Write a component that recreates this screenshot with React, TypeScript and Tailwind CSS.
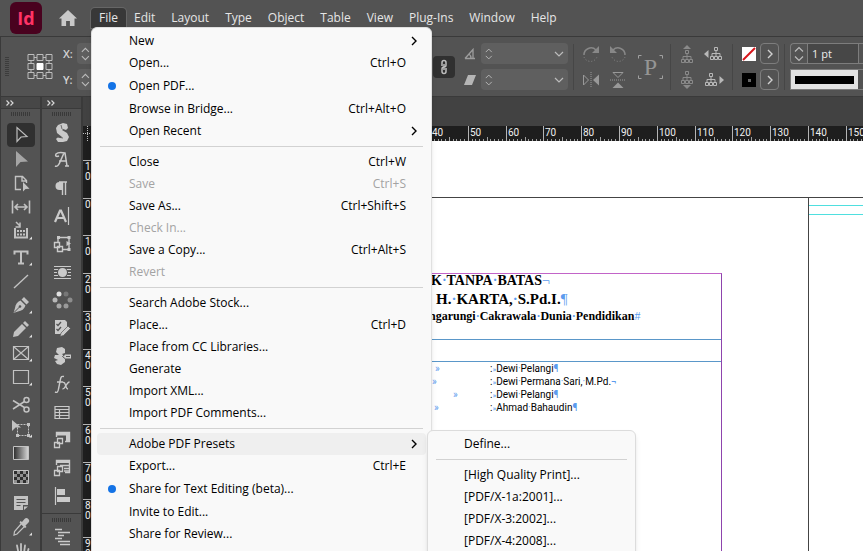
import { Fragment, type ReactNode } from 'react';

type MenuEntry = {
  label: string;
  keys?: string;
  dot?: boolean;
  sub?: boolean;
  disabled?: boolean;
  active?: boolean;
};

const menus = ['File', 'Edit', 'Layout', 'Type', 'Object', 'Table', 'View', 'Plug-Ins', 'Window', 'Help'];

const fileMenu: MenuEntry[][] = [
  [
    { label: 'New', sub: true },
    { label: 'Open...', keys: 'Ctrl+O' },
    { label: 'Open PDF...', dot: true },
    { label: 'Browse in Bridge...', keys: 'Ctrl+Alt+O' },
    { label: 'Open Recent', sub: true },
  ],
  [
    { label: 'Close', keys: 'Ctrl+W' },
    { label: 'Save', keys: 'Ctrl+S', disabled: true },
    { label: 'Save As...', keys: 'Ctrl+Shift+S' },
    { label: 'Check In...', disabled: true },
    { label: 'Save a Copy...', keys: 'Ctrl+Alt+S' },
    { label: 'Revert', disabled: true },
  ],
  [
    { label: 'Search Adobe Stock...' },
    { label: 'Place...', keys: 'Ctrl+D' },
    { label: 'Place from CC Libraries...' },
    { label: 'Generate' },
    { label: 'Import XML...' },
    { label: 'Import PDF Comments...' },
  ],
  [
    { label: 'Adobe PDF Presets', sub: true, active: true },
    { label: 'Export...', keys: 'Ctrl+E' },
    { label: 'Share for Text Editing (beta)...', dot: true },
    { label: 'Invite to Edit...' },
    { label: 'Share for Review...' },
  ],
];

const presets = ['[High Quality Print]...', '[PDF/X-1a:2001]...', '[PDF/X-3:2002]...', '[PDF/X-4:2008]...'];

function Chevron({ className = '' }: { className?: string }) {
  return (
    <svg className={className} width="6" height="10" viewBox="0 0 6 10" fill="none" stroke="currentColor" strokeWidth="1.4">
      <path d="M1 1l4 4-4 4" />
    </svg>
  );
}

function Separator() {
  return (
    <div className="flex h-[9px] items-center px-2">
      <div className="h-px w-full bg-[#d2d2d2]" />
    </div>
  );
}

function PresetMenu() {
  return (
    <div className="absolute -top-[3px] left-[330px] z-10 w-[209px] rounded-md border border-[#dcdcdc] bg-[#f9f9f9] pt-[2px] pb-8 shadow-md">
      <button className="flex h-[22px] w-full items-center pl-9">Define...</button>
      <Separator />
      {presets.map((p) => (
        <button key={p} className="flex h-[22px] w-full items-center pl-9 whitespace-nowrap">
          {p}
        </button>
      ))}
    </div>
  );
}

function FileMenu() {
  return (
    <div className="absolute top-[19px] left-0 z-20 h-[560px] w-[341px] rounded-md border border-[#e0e0e0] bg-[#f9f9f9] pt-[2px] text-black shadow-md">
      {fileMenu.map((group, i) => (
        <Fragment key={i}>
          {i > 0 && <Separator />}
          {group.map((item) => (
            <div key={item.label} className="relative mx-[5px]">
              <button
                disabled={item.disabled}
                className={`flex w-full items-center rounded ${item.dot ? 'h-6' : 'h-[22px]'} ${
                  item.active ? 'bg-[#efefef]' : ''
                } ${item.disabled ? 'text-[#a3a3a3]' : ''}`}
              >
                <span className="flex w-8 items-center pl-[11px]">
                  {item.dot && <span className="size-2 rounded-full bg-[#1473e6]" />}
                </span>
                <span className="flex-1 text-left">{item.label}</span>
                <span>{item.keys}</span>
                <span className="flex w-5 pl-[5px]">{item.sub && <Chevron />}</span>
              </button>
              {item.active && <PresetMenu />}
            </div>
          ))}
        </Fragment>
      ))}
    </div>
  );
}

function MenuBar() {
  return (
    <header className="flex h-[37px] shrink-0 border-b border-[#3a3a3a]">
      <div className="flex w-[91px] shrink-0 items-center pl-[10px]">
        <div className="flex size-8 items-center justify-center rounded-md bg-[#49021f] font-['Open_Sans',sans-serif] text-lg font-bold text-[#ff3366]">
          Id
        </div>
        <svg className="ml-4" width="20" height="18" viewBox="0 0 20 18" fill="#c9c9c9">
          <path d="M10 1L1 9.6h2.5V17h4.6v-5h3.8v5h4.6V9.6H19z" />
        </svg>
      </div>
      <nav className="flex pt-2 text-[#e6e6e6]">
        {menus.map((m) => (
          <div key={m} className="relative">
            <button
              className={`flex h-5 items-center rounded-t px-2 ${m === 'File' ? 'bg-[#383838] ring-1 ring-[#666]' : ''}`}
            >
              {m}
            </button>
            {m === 'File' && <FileMenu />}
          </div>
        ))}
      </nav>
    </header>
  );
}

function Spinner() {
  return (
    <svg width="10" height="16" viewBox="0 0 10 16" fill="none" stroke="#bcbcbc" strokeWidth="1.2">
      <path d="M1 5.5l4-4 4 4M1 10.5l4 4 4-4" />
    </svg>
  );
}

function Field({ label, drop = false }: { label: string; drop?: boolean }) {
  return (
    <div className="flex h-[21px] w-[87px] items-center rounded-sm bg-[#5f5f5f] px-[4px]">
      <Spinner />
      <input aria-label={label} className="w-full min-w-0 bg-transparent px-1 outline-none" />
      {drop && (
        <svg className="shrink-0" width="10" height="6" viewBox="0 0 10 6" fill="none" stroke="#bcbcbc" strokeWidth="1.2">
          <path d="M1 1l4 4 4-4" />
        </svg>
      )}
    </div>
  );
}

function Divider() {
  return <div className="h-[46px] w-px bg-[#464646]" />;
}

// small hierarchy glyph, shared by the container/content selectors
function Tree({ arrow, bright = false }: { arrow: 'up' | 'down' | 'left' | 'right'; bright?: boolean }) {
  const arrows = {
    up: 'M10 0l4 4H6z',
    down: 'M6 14h8l-4 4z',
    left: 'M4.500 5v8L0 9z',
    right: 'M15.500 5v8L20 9z',
  };
  const dx = arrow === 'left' ? 2 : arrow === 'right' ? -3 : 0;
  const dy = arrow === 'up' ? 3 : arrow === 'down' ? -2 : 0;
  const color = bright ? '#b8b8b8' : '#8a8a8a';
  return (
    <svg width="20" height="18" viewBox="0 0 20 18" fill="none" stroke={color}>
      <path d={arrows[arrow]} fill={color} stroke="none" />
      <g transform={`translate(${dx} ${dy})`}>
        <path d="M8.500 2.500h3v3h-3zM4.500 11.500h3v3h-3zM8.500 11.500h3v3h-3zM12.500 11.500h3v3h-3zM10 5.500v6M6 11.500v-3h8v3" />
      </g>
    </svg>
  );
}

function ControlBar() {
  return (
    <div className="flex h-[60px] shrink-0 items-center overflow-hidden border-b border-l border-[#3a3a3a]">
      <div className="flex w-[432px] shrink-0 items-center">
        <svg className="ml-1" width="4" height="20" viewBox="0 0 4 20" stroke="#3c3c3c" strokeWidth="4" strokeDasharray="1 1">
          <path d="M2 0v20" />
        </svg>
        <svg className="ml-[18px]" width="26" height="26" viewBox="0 0 26 26" fill="none" stroke="#bdbdbd">
          <path d="M1 .5h6v6H1zM10 .5h6v6h-6zM19 .5h6v6h-6zM1 9.500h6v6H1zM19 9.500h6v6h-6zM1 18.500h6v6H1zM10 18.500h6v6h-6zM19 18.500h6v6h-6zM7 3.500h3M16 3.500h3M7 21.500h3M16 21.500h3M4 6.500v3M4 15.500v3M22 6.500v3M22 15.500v3" />
          <path d="M10 9.500h6v6h-6z" fill="#fff" stroke="#fff" />
        </svg>
        <div className="ml-[10px] grid gap-[5px] text-[11px] font-semibold text-[#d2d2d2]">
          <label className="flex h-[21px] items-center">
            <span className="w-[14px]">X:</span>
            <Field label="X" />
          </label>
          <label className="flex h-[21px] items-center">
            <span className="w-[14px]">Y:</span>
            <Field label="Y" />
          </label>
        </div>
      </div>

      <button aria-label="Constrain proportions" className="flex h-[22px] w-[22px] shrink-0 items-center justify-center rounded-sm bg-[#303030]">
        <svg width="8" height="16" viewBox="0 0 8 16" fill="none" stroke="#bdbdbd" strokeWidth="1.500">
          <path d="M2 7V3.500a2 2 0 014 0V6a2 2 0 01-2 2M6 9v3.500a2 2 0 01-4 0V10a2 2 0 012-2M4 5v6" />
        </svg>
      </button>

      <div className="ml-[9px] grid shrink-0 gap-[5px]">
        <div className="flex items-center gap-[5px]">
          <svg width="12" height="12" viewBox="0 0 12 12" fill="none" stroke="#9d9d9d" strokeWidth="1.300">
            <path d="M1 10.500h10M1 10.500L9 1.500v9M5 6c1.500 1 2 2.500 2 4.500" />
          </svg>
          <Field label="Rotation angle" drop />
        </div>
        <div className="flex items-center gap-[5px]">
          <svg width="12" height="12" viewBox="0 0 12 12" fill="#b5b5b5">
            <path d="M4 1h8L8 11H0z" />
          </svg>
          <Field label="Shear angle" drop />
        </div>
      </div>

      <div className="ml-[5px] flex shrink-0 items-center">
        <Divider />
        <div className="ml-[8px] grid grid-cols-2 gap-x-[9px] gap-y-[8px]">
          <svg width="18" height="18" viewBox="0 0 18 18" fill="none" stroke="#888" strokeWidth="1.500">
            <path d="M2 10a7 7 0 0112-5" />
            <path d="M17 1v7h-7z" fill="#888" stroke="none" />
            <path d="M2 12a7 7 0 0013 0" strokeWidth="1" strokeDasharray="1 2" />
          </svg>
          <svg width="18" height="18" viewBox="0 0 18 18" fill="none" stroke="#888" strokeWidth="1.500">
            <path d="M16 10A7 7 0 004 5" />
            <path d="M1 1v7h7z" fill="#888" stroke="none" />
            <path d="M16 12a7 7 0 01-13 0" strokeWidth="1" strokeDasharray="1 2" />
          </svg>
          <svg width="18" height="18" viewBox="0 0 18 18" fill="none" stroke="#999">
            <path d="M1.500 4v10l5-5z" />
            <path d="M17 3.500v11L11 9z" fill="#999" stroke="none" />
            <path d="M9 1v16" strokeDasharray="1 1" />
          </svg>
          <svg width="18" height="18" viewBox="0 0 18 18" fill="none" stroke="#999">
            <path d="M4 1.500h10l-5 5z" />
            <path d="M3.500 17h11L9 11.500z" fill="#999" stroke="none" />
            <path d="M1 9h16" strokeDasharray="1 1" />
          </svg>
        </div>
        <div className="relative ml-[10px] flex h-[26px] w-[27px] items-center justify-center font-['Liberation_Serif',serif] text-2xl text-[#959595]">
          <svg className="absolute inset-0" width="27" height="26" viewBox="0 0 27 26" fill="none" stroke="#a0a0a0">
            <path d="M1.500 4.500v-3h3M22.500 1.500h3v3M25.500 21.500v3h-3M4.500 24.500h-3v-3" />
          </svg>
          P
        </div>
        <div className="ml-[6px] flex items-center">
          <Divider />
          <div className="ml-[6px] grid grid-cols-2 gap-x-[7px] gap-y-[8px]">
            <Tree arrow="up" />
            <Tree arrow="left" bright />
            <Tree arrow="down" />
            <Tree arrow="right" bright />
          </div>
        </div>
      </div>

      <div className="ml-[8px] flex shrink-0 items-center">
        <Divider />
        <div className="ml-[9px] grid gap-[5px]">
          <div className="flex items-center gap-[4px]">
            <svg width="14" height="14" viewBox="0 0 14 14">
              <path d="M0 0h14v14H0z" fill="#fff" />
              <path d="M1 13L13 1" stroke="#d8151b" strokeWidth="2" />
            </svg>
            <button aria-label="Fill options" className="flex h-[21px] w-[19px] items-center justify-center rounded-sm border border-[#7d7d7d] text-[#d0d0d0]">
              <Chevron />
            </button>
          </div>
          <div className="flex items-center gap-[4px]">
            <svg width="14" height="14" viewBox="0 0 14 14">
              <path d="M0 0h14v14H0z" />
              <path d="M6 6h3v3H6z" fill="#666" />
            </svg>
            <button aria-label="Stroke options" className="flex h-[21px] w-[19px] items-center justify-center rounded-sm border border-[#7d7d7d] text-[#d0d0d0]">
              <Chevron />
            </button>
          </div>
        </div>
      </div>

      <div className="ml-[5px] flex flex-1 items-center">
        <Divider />
        <div className="ml-[5px] grid flex-1 gap-[5px]">
          <div className="flex h-[21px] rounded-l-sm border border-r-0 border-[#7d7d7d]">
            <div className="flex w-4 items-center justify-center">
              <Spinner />
            </div>
            <input
              aria-label="Stroke weight"
              defaultValue="1 pt"
              className="w-[52px] border-x border-[#7d7d7d] bg-[#474747] pl-1 text-[11px] text-[#ececec] outline-none"
            />
          </div>
          <button aria-label="Stroke style" className="flex h-[21px] border border-r-0 border-[#7d7d7d]">
            <span className="flex h-full w-[67px] items-center bg-[#e2e2e2] px-1">
              <span className="h-2 w-full bg-black" />
            </span>
          </button>
        </div>
      </div>
    </div>
  );
}

// tool palette drawings, all on a 24 x 24 grid
const toolGroups: { name: string; corner?: boolean; art: ReactNode }[][] = [
  [
    { name: 'Selection', art: <path d="M8 4.500v14l4-4.500 6-.5z" fill="none" stroke="#bdbdbd" strokeWidth="1.200" /> },
    { name: 'Direct selection', art: <path d="M7 4v16l4.500-5 7.500-.5z" fill="#a5a5a5" /> },
    {
      name: 'Page',
      art: (
        <>
          <path d="M12 18.500H6.500v-13h7l4 4V12M13 5.500v4.500h4.500" fill="none" stroke="#c2c2c2" strokeWidth="1.400" />
          <path d="M14 11v9.500l2.500-2.500 4-.2z" fill="#c2c2c2" />
        </>
      ),
    },
    {
      name: 'Gap',
      art: (
        <path
          d="M3.500 5.500v13M20.500 5.500v13M6 12h12M9 9l-3 3 3 3M15 9l3 3-3 3"
          fill="none"
          stroke="#c2c2c2"
          strokeWidth="1.600"
        />
      ),
    },
    {
      name: 'Content collector',
      corner: true,
      art: (
        <>
          <path d="M6 9v9.500h12V9" fill="none" stroke="#c2c2c2" strokeWidth="2" />
          <path d="M8 11h2v2H8zM11 11h2v2h-2zM14 11h2v2h-2zM8 14.500h2v2H8zM11 14.500h2v2h-2zM14 14.500h2v2h-2z" fill="#c2c2c2" />
          <path d="M7 3l4 4M11 3.500V8H6.500" fill="none" stroke="#c2c2c2" strokeWidth="1.500" />
        </>
      ),
    },
  ],
  [
    {
      name: 'Type',
      corner: true,
      art: <path d="M5.500 9.500V6.500h13v3M12 6.500v12M9 18.500h6" fill="none" stroke="#c2c2c2" strokeWidth="2" />,
    },
    { name: 'Line', art: <path d="M5 19L19 6" fill="none" stroke="#c2c2c2" strokeWidth="1.400" /> },
    {
      name: 'Pen',
      corner: true,
      art: (
        <>
          <path d="M15 4l5 5-2.500 2.500-5-5zM11.500 7.500l5 5c-1 3.500-4 5.500-7.500 6L4.500 20 6 15c.5-3.500 2-6 5.500-7.500z" fill="#c2c2c2" />
          <path d="M5 19.500l5.500-5.500" stroke="#535353" />
          <circle cx="11" cy="13.500" r="1.300" fill="#535353" />
        </>
      ),
    },
    {
      name: 'Pencil',
      corner: true,
      art: <path d="M16 4l4 4-2 2-4-4zM13 7l4 4-8 8-5 1 1-5z" fill="#c2c2c2" />,
    },
    {
      name: 'Rectangle frame',
      corner: true,
      art: <path d="M4.500 5.500h15v13h-15zM4.500 5.500l15 13M19.500 5.500l-15 13" fill="none" stroke="#c2c2c2" strokeWidth="1.200" />,
    },
    {
      name: 'Rectangle',
      corner: true,
      art: <path d="M4.500 5.500h15v13h-15z" fill="none" stroke="#c2c2c2" strokeWidth="1.200" />,
    },
  ],
  [
    {
      name: 'Scissors',
      art: (
        <g fill="none" stroke="#c2c2c2" strokeWidth="1.500">
          <circle cx="17.500" cy="7" r="2.500" />
          <circle cx="17.500" cy="16.500" r="2.500" />
          <path d="M4 7.500L15.500 14.500M4 16L15.500 8.500" />
        </g>
      ),
    },
    {
      name: 'Free transform',
      corner: true,
      art: (
        <>
          <path d="M8.500 7.500h11v11h-11z" fill="none" stroke="#c2c2c2" strokeDasharray="2 1" />
          <path d="M18 6h3v3h-3zM18 17h3v3h-3zM7 17h3v3H7zM3 3v11l3.500-3.500H12z" fill="#c2c2c2" />
        </>
      ),
    },
    {
      name: 'Gradient swatch',
      art: (
        <>
          <defs>
            <linearGradient id="swatch">
              <stop offset="0" stopColor="#2b2b2b" />
              <stop offset="1" stopColor="#d8d8d8" />
            </linearGradient>
          </defs>
          <path d="M4.500 5.500h15v13h-15z" fill="url(#swatch)" stroke="#c2c2c2" />
        </>
      ),
    },
    {
      name: 'Gradient feather',
      art: (
        <>
          <path d="M4.500 5.500h15v13h-15z" fill="#2e2e2e" stroke="#c2c2c2" />
          <path
            d="M8 6h3v3H8zM14 6h3v3h-3zM5 9h3v3H5zM11 9h3v3h-3zM17 9h2v3h-2zM8 12h3v3H8zM14 12h3v3h-3zM5 15h3v3H5zM11 15h3v3h-3zM17 15h2v3h-2z"
            fill="#8f8f8f"
          />
        </>
      ),
    },
  ],
  [
    {
      name: 'Note',
      art: (
        <>
          <path d="M5 5h14v9h-5v5H5zM15 15.500h4L15 19z" fill="#c2c2c2" />
          <path d="M7.500 8.500h9M7.500 11.500h9M7.500 14.500h4" stroke="#535353" />
        </>
      ),
    },
    {
      name: 'Eyedropper',
      corner: true,
      art: (
        <>
          <path d="M12.500 8.500l3 3-7.500 7.500-3 1 .5-3.500z" fill="none" stroke="#c2c2c2" strokeWidth="1.200" />
          <path d="M11.500 6l1.500 1 2.500-3a2.300 2.300 0 013.800 3.800L16.500 10.500l1 1.500-1.500 1-5.500-5.500z" fill="#c2c2c2" />
        </>
      ),
    },
    {
      name: 'Hand',
      art: (
        <path
          d="M9 20l-3.500-6M9.500 14L8 6.500M12 13.500V5M15 14l1-7.500M18 16l1.500-6M8 14h10v6H9z"
          fill="#c2c2c2"
          stroke="#c2c2c2"
          strokeWidth="1.800"
          strokeLinecap="round"
        />
      ),
    },
  ],
];

const panelIcons: { name: string; art: ReactNode }[] = [
  {
    name: 'CC Libraries',
    art: (
      <>
        <path d="M8 5l5-2 4 1 1 4-2 2-3-1-1 1 5 3 2 4-2 4-4 1H8l-2-3 2-2 3 1 1-1-5-4-1-5z" fill="#cacaca" />
        <path d="M11 5l1 4M7 17l6 1" stroke="#535353" strokeWidth=".8" />
      </>
    ),
  },
  {
    name: 'Glyphs',
    art: (
      <path
        d="M5 18c2 1 4-1 5-4l4-9h1l2 13M9 13h8M15 18h4M9 8c-3 1-4 0-3-2 1-1 4-2 9-1"
        fill="none"
        stroke="#cacaca"
        strokeWidth="1.500"
      />
    ),
  },
  {
    name: 'Paragraph',
    art: (
      <>
        <path d="M12 14H9.500a4 4 0 010-8H12z" fill="#cacaca" />
        <path d="M9 6h8M12.500 6v13M15.500 6v13" fill="none" stroke="#cacaca" strokeWidth="1.400" />
      </>
    ),
  },
  {
    name: 'Character',
    art: (
      <>
        <path d="M5 18L10 6.500h1L16 18M7 14h7" fill="none" stroke="#cacaca" strokeWidth="2.200" />
        <path d="M18.500 3v18" stroke="#cacaca" strokeWidth="1.200" />
      </>
    ),
  },
  {
    name: 'Object styles',
    art: (
      <>
        <path d="M8 10V5.500h11v12h-7" fill="none" stroke="#cacaca" strokeWidth="1.400" />
        <path d="M7 4h3v3H7zM17.500 4h3v3h-3zM17.500 16h3v3h-3zM16.500 9l4.500 2.500-4.500 2.500z" fill="#cacaca" />
        <path d="M4.500 10.500h5v5h-5zM7.500 14.500h5v5h-5z" fill="#535353" stroke="#cacaca" strokeWidth="1.400" />
      </>
    ),
  },
  {
    name: 'Text wrap',
    art: (
      <>
        <path d="M4 6.500h17M4 18.500h17M4 9.500h4M17 9.500h4M4 12.500h3M18 12.500h3M4 15.500h4M17 15.500h4" stroke="#cacaca" strokeWidth="1.200" />
        <circle cx="12.500" cy="12.500" r="4.500" fill="#cacaca" />
      </>
    ),
  },
  {
    name: 'Effects',
    art: (
      <g fill="#8d8d8d">
        <circle cx="9" cy="6" r="2.500" fill="#e0e0e0" />
        <circle cx="16" cy="6" r="2.500" fill="#777" />
        <circle cx="5" cy="12" r="2.500" fill="#b8b8b8" />
        <circle cx="20" cy="12" r="2.500" />
        <circle cx="9" cy="18" r="2.500" fill="#a8a8a8" />
        <circle cx="16" cy="18" r="2.500" fill="#9a9a9a" />
      </g>
    ),
  },
  {
    name: 'Preflight',
    art: (
      <>
        <path d="M5 4h10l2 2v6l-6 6H5z" fill="#cacaca" />
        <path d="M6.500 8l1.500 1.500L11 6M6.500 13l1.500 1.500L11 11" fill="none" stroke="#535353" strokeWidth="1.300" />
        <path d="M18 10l2.500 2.500-7 7-3.500 1 1-3.500z" fill="#cacaca" stroke="#535353" strokeWidth=".7" />
      </>
    ),
  },
  {
    name: 'Color theme',
    art: (
      <>
        <path d="M7 4l5-1 3 2v4l-3 1 3 3v5l-4 3-4-1-2-3 3-1-4-2 1-3 4 0-3-3z" fill="#cacaca" />
        <path d="M12.500 12.500l3-2.500h6v5h-6z" fill="#cacaca" stroke="#535353" />
        <path d="M16 12.500h4" stroke="#535353" />
      </>
    ),
  },
  {
    name: 'fx',
    art: (
      <path
        d="M5 20c2 1 3 0 3.500-3l2-10c.5-2.500 1.500-3 3.500-2.500M7 10h6M13 10.500c3-1 2 6 5 6.500M19.500 10c-3 0-4 7-7 7"
        fill="none"
        stroke="#cacaca"
        strokeWidth="1.400"
      />
    ),
  },
  {
    name: 'Table',
    art: <path d="M5 6.500h14v12H5zM5 9.500h14M5 12.500h14M5 15.500h14M9.500 9.500v9" fill="none" stroke="#cacaca" strokeWidth="1.200" />,
  },
  {
    name: 'Table styles',
    art: (
      <>
        <path d="M6.500 9V4.500h13v9H15" fill="none" stroke="#cacaca" strokeWidth="1.400" />
        <path d="M6 4h14v3.500H6zM16 7h3.500v6H16z" fill="#cacaca" />
        <path d="M7.500 10.500h5v5h-5zM4.500 14.500h5v5h-5z" fill="#535353" stroke="#cacaca" strokeWidth="1.300" />
      </>
    ),
  },
  {
    name: 'Cell styles',
    art: (
      <>
        <path d="M6.500 9V4.500h13v12H15" fill="none" stroke="#cacaca" strokeWidth="1.400" />
        <path d="M6 4h14v3H6z" fill="#cacaca" />
        <path d="M10 9.500h9M14 12.500h5M14 15h5" stroke="#cacaca" strokeWidth="1.400" />
        <path d="M7.500 10.500h5v5h-5zM4.500 14.500h5v5h-5z" fill="#535353" stroke="#cacaca" strokeWidth="1.300" />
      </>
    ),
  },
  {
    name: 'Align',
    art: (
      <>
        <path d="M5.500 3v18" stroke="#cacaca" strokeWidth="1.200" />
        <path d="M7 5h8v6H7zM7 13h13v5H7z" fill="#cacaca" />
      </>
    ),
  },
];

function Grip() {
  return (
    <svg className="mx-auto" width="20" height="4" viewBox="0 0 20 4" stroke="#393939" strokeWidth="4" strokeDasharray="1 1">
      <path d="M0 2h20" />
    </svg>
  );
}

function DockHeader() {
  return (
    <div className="flex h-3 items-center border-b border-[#3a3a3a] bg-[#474747] pl-[5px]">
      <svg width="8" height="6" viewBox="0 0 8 6" fill="none" stroke="#d8d8d8" strokeWidth="1.200">
        <path d="M.5.5L3 3 .5 5.500M4.500.5L7 3 4.500 5.500" />
      </svg>
    </div>
  );
}

function ToolColumn() {
  return (
    <div className="w-[41px] border-x border-[#3a3a3a]">
      <DockHeader />
      <div className="pt-[3px] pb-[7px]">
        <Grip />
      </div>
      {toolGroups.map((group, i) => (
        <div key={i} className={i === 2 ? 'mt-[4px]' : i > 0 ? 'mt-[2px]' : ''}>
          {group.map((tool) => (
            <button
              key={tool.name}
              aria-label={tool.name}
              className={`mx-auto flex h-6 w-7 items-center justify-center rounded-sm ${
                tool.name === 'Selection' ? 'bg-[#303030]' : ''
              }`}
            >
              <svg className="shrink-0 overflow-visible" width="24" height="24" viewBox="0 0 24 24">
                {tool.art}
                {tool.corner && <path d="M23 17.500v3h-3z" fill="#e0e0e0" />}
              </svg>
            </button>
          ))}
        </div>
      ))}
    </div>
  );
}

function PanelColumn() {
  return (
    <div className="w-[41px] border-x border-[#3a3a3a]">
      <DockHeader />
      <div className="pt-[3px] pb-[2px]">
        <Grip />
      </div>
      {panelIcons.map((panel) => (
        <button key={panel.name} aria-label={panel.name} className="mx-auto flex h-7 w-7 items-center justify-center">
          <svg width="24" height="24" viewBox="0 0 24 24">
            {panel.art}
          </svg>
        </button>
      ))}
      <div className="mt-[3px] border-t border-[#3a3a3a] pt-1">
        <Grip />
        <button aria-label="Paragraph styles" className="mx-auto flex h-7 w-7 items-center justify-center">
          <svg width="24" height="24" viewBox="0 0 24 24" stroke="#cacaca" strokeWidth="1.400">
            <path d="M5 5.500h7M8 8.500h12M8 11.500h6M5 14.500h7M8 17.500h12M10 20.500h10" />
          </svg>
        </button>
      </div>
    </div>
  );
}

const hLabels = [40, 50, 60, 70, 80, 90, 100, 110, 120, 130, 140, 150];
const vLabels = ['10', '0', '10', '20', '30', '40', '50', '60', '70', '80', '90'];
const STEP = 37.8;

function HorizontalRuler() {
  const minor = Array.from({ length: 120 }, (_, i) => i);
  return (
    <svg className="block h-[15px] w-full font-['Roboto',sans-serif]" fill="#f0f0f0" fontSize="10">
      {minor.map((i) => (
        <rect key={i} x={Math.round(331 + (i * STEP) / 10)} y={i % 5 === 0 ? 11 : 13} width="1" height="4" fill="#a0a0a0" />
      ))}
      {hLabels.map((n, i) => (
        <g key={n}>
          <rect x={Math.round(331 + i * STEP)} y="0" width="1" height="15" fill="#b5b5b5" />
          <text x={Math.round(331 + i * STEP) + 2} y="10">
            {n}
          </text>
        </g>
      ))}
    </svg>
  );
}

function VerticalRuler() {
  return (
    <svg className="block h-full w-4 shrink-0 bg-[#1e1e1e] font-['Roboto',sans-serif]" fill="#f0f0f0" fontSize="10">
      {vLabels.map((n, i) => {
        const y = Math.round(19 + i * 37.7);
        return (
          <g key={i}>
            <rect x="0" y={y} width="16" height="1" fill="#b5b5b5" />
            {n.split('').map((d, k) => (
              <text key={k} x="2" y={y + 10 + k * 10}>
                {d}
              </text>
            ))}
          </g>
        );
      })}
    </svg>
  );
}

// text with its hidden characters shown: a dot for every space, then the end mark
function Marked({ text, end }: { text: string; end: string }) {
  return (
    <>
      {text.split(' ').map((word, i) => (
        <Fragment key={i}>
          {i > 0 && <span className="text-[#5b9bee]">·</span>}
          {word}
        </Fragment>
      ))}
      <span className="font-normal text-[#5b9bee]">{end}</span>
    </>
  );
}

const staff = [
  { name: 'Dewi Pelangi', end: '¶', tab: 'pl-[4px]' },
  { name: 'Dewi Permana Sari, M.Pd.', end: '¬', tab: 'pl-[1px]' },
  { name: 'Dewi Pelangi', end: '¶', tab: 'pl-[22px]' },
  { name: 'Ahmad Bahaudin', end: '¶', tab: 'pl-[3px]' },
];

function Document() {
  return (
    <main className="flex min-w-0 flex-1 flex-col">
      <div className="h-[29px] shrink-0 bg-[#424242]" />
      <div className="flex h-[15px] shrink-0 bg-[#1e1e1e]">
        <svg className="w-4 shrink-0" height="15" viewBox="0 0 16 15" stroke="#c0c0c0" strokeDasharray="1 1">
          <path d="M4.500 0v15M0 7.500h16" />
        </svg>
        <HorizontalRuler />
      </div>
      <div className="flex min-h-0 flex-1 overflow-hidden">
        <VerticalRuler />
        <div className="flex flex-1 bg-white pt-14 text-black">
          <section className="w-[710px] shrink-0 border-t border-r border-[#444]">
            <div className="mt-[75px] mr-[86px] h-[600px] border-t border-r border-t-[#c264c8] border-r-[#8e44ad]">
              <div className="h-[65px] font-['Liberation_Serif',serif] font-bold whitespace-nowrap">
                <p className="h-[15px] pl-[332px] text-[14px] leading-[14px]">
                  <Marked text="K TANPA BATAS" end="¬" />
                </p>
                <p className="h-[19px] pl-[337px] text-[15px] leading-[21px]">
                  <Marked text="H. KARTA, S.Pd.I." end="¶" />
                </p>
                <p className="pl-[330px] text-[12px] leading-4">
                  <Marked text="ngarungi Cakrawala Dunia Pendidikan" end="#" />
                </p>
              </div>
              <div className="h-[23px] border-y border-[#5a97c9]" />
              <table className="ml-[332px] font-['Roboto',sans-serif] text-[10px] leading-[13px]">
                <tbody>
                  {staff.map((row, i) => (
                    <tr key={i}>
                      <td className={`w-[59px] p-0 align-top text-[10px] text-[#5b9bee] ${row.tab}`}>»</td>
                      <td className="p-0 align-top whitespace-nowrap">
                        :<span className="text-[8px] leading-none text-[#5b9bee]">»</span>
                        <Marked text={row.name} end={row.end} />
                      </td>
                    </tr>
                  ))}
                </tbody>
              </table>
            </div>
          </section>
          <section className="flex-1 border-t border-[#444] pt-[7px]">
            <div className="h-[10px] border-y border-[#4fdfdf]" />
          </section>
        </div>
      </div>
    </main>
  );
}

export default function App() {
  return (
    <div className="flex h-screen flex-col overflow-hidden bg-[#535353] font-['Open_Sans',sans-serif] text-xs leading-4">
      <MenuBar />
      <ControlBar />
      <div className="flex min-h-0 flex-1">
        <aside className="flex shrink-0 overflow-hidden border-r border-[#3a3a3a]">
          <ToolColumn />
          <PanelColumn />
        </aside>
        <Document />
      </div>
    </div>
  );
}
